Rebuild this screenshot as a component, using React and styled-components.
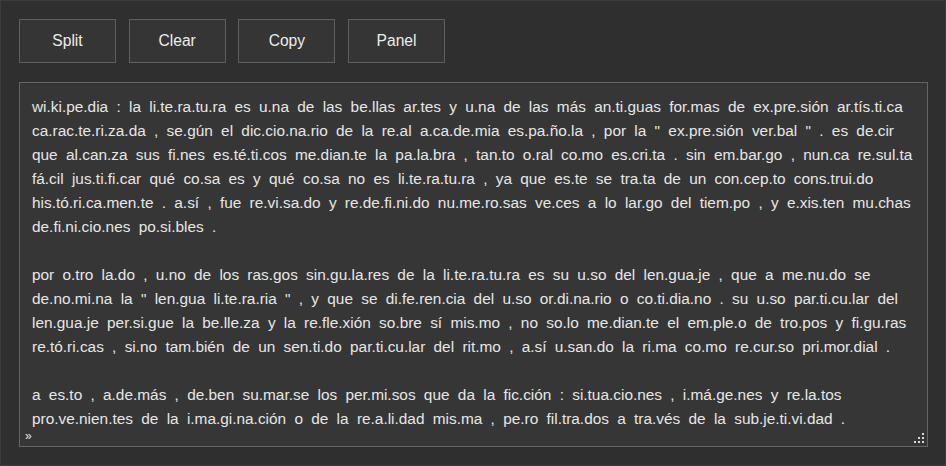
import React from "react";
import styled, { createGlobalStyle } from "styled-components";

const Global = createGlobalStyle`
  html, body { margin: 0; padding: 0; background: #2f2f2f; }
  body { font-family: "Liberation Sans", Arial, sans-serif; }
`;

const Page = styled.div`
  box-sizing: border-box;
  width: 946px;
  height: 466px;
  border: 1px solid #3c3c3c;
  background: #2f2f2f;
  padding: 18px;
  display: flex;
  flex-direction: column;
  gap: 19px;
`;

const Toolbar = styled.div`
  display: flex;
  gap: 12.7px;
`;

const Button = styled.button`
  box-sizing: border-box;
  width: 97px;
  height: 44px;
  background: #353535;
  border: 1px solid #5e5e5e;
  color: #ececec;
  font-family: "Liberation Sans", Arial, sans-serif;
  font-size: 15.6px;
  padding: 0;
  cursor: pointer;
`;

const Editor = styled.div`
  position: relative;
  box-sizing: border-box;
  width: 909px;
  height: 366px;
  background: #363636;
  border: 1px solid #646464;
  padding: 12px 12px;
  color: #e6e6e6;
  font-size: 15.4px;
  line-height: 24px;
  word-spacing: 4px;
  white-space: pre;
`;

const Line = styled.div`
  height: 24px;
`;

const Marker = styled.span`
  position: absolute;
  left: 5px;
  bottom: 3px;
  font-size: 12px;
  line-height: 14px;
  color: #e6e6e6;
  word-spacing: 0;
`;

const Grip = styled.svg`
  position: absolute;
  right: 1px;
  bottom: 1px;
`;

const lines = [
  "wi.ki.pe.dia : la li.te.ra.tu.ra es u.na de las be.llas ar.tes y u.na de las más an.ti.guas for.mas de ex.pre.sión ar.tís.ti.ca",
  "ca.rac.te.ri.za.da , se.gún el dic.cio.na.rio de la re.al a.ca.de.mia es.pa.ño.la , por la \" ex.pre.sión ver.bal \" . es de.cir",
  "que al.can.za sus fi.nes es.té.ti.cos me.dian.te la pa.la.bra , tan.to o.ral co.mo es.cri.ta . sin em.bar.go , nun.ca re.sul.ta",
  "fá.cil jus.ti.fi.car qué co.sa es y qué co.sa no es li.te.ra.tu.ra , ya que es.te se tra.ta de un con.cep.to cons.trui.do",
  "his.tó.ri.ca.men.te . a.sí , fue re.vi.sa.do y re.de.fi.ni.do nu.me.ro.sas ve.ces a lo lar.go del tiem.po , y e.xis.ten mu.chas",
  "de.fi.ni.cio.nes po.si.bles .",
  "",
  "por o.tro la.do , u.no de los ras.gos sin.gu.la.res de la li.te.ra.tu.ra es su u.so del len.gua.je , que a me.nu.do se",
  "de.no.mi.na la \" len.gua li.te.ra.ria \" , y que se di.fe.ren.cia del u.so or.di.na.rio o co.ti.dia.no . su u.so par.ti.cu.lar del",
  "len.gua.je per.si.gue la be.lle.za y la re.fle.xión so.bre sí mis.mo , no so.lo me.dian.te el em.ple.o de tro.pos y fi.gu.ras",
  "re.tó.ri.cas , si.no tam.bién de un sen.ti.do par.ti.cu.lar del rit.mo , a.sí u.san.do la ri.ma co.mo re.cur.so pri.mor.dial .",
  "",
  "a es.to , a.de.más , de.ben su.mar.se los per.mi.sos que da la fic.ción : si.tua.cio.nes , i.má.ge.nes y re.la.tos",
  "pro.ve.nien.tes de la i.ma.gi.na.ción o de la re.a.li.dad mis.ma , pe.ro fil.tra.dos a tra.vés de la sub.je.ti.vi.dad .",
];

export default function App() {
  return (
    <>
      <Global />
      <Page>
        <Toolbar>
          <Button>Split</Button>
          <Button>Clear</Button>
          <Button>Copy</Button>
          <Button>Panel</Button>
        </Toolbar>
        <Editor>
          {lines.map((l, i) => (
            <Line key={i}>{l}</Line>
          ))}
          <Marker>»</Marker>
          <Grip width="12" height="12" viewBox="0 0 12 12">
            <g fill="#d8d8d8">
              <rect x="8" y="0" width="2" height="2" />
              <rect x="4" y="4" width="2" height="2" />
              <rect x="8" y="4" width="2" height="2" />
              <rect x="0" y="8" width="2" height="2" />
              <rect x="4" y="8" width="2" height="2" />
              <rect x="8" y="8" width="2" height="2" />
            </g>
          </Grip>
        </Editor>
      </Page>
    </>
  );
}
